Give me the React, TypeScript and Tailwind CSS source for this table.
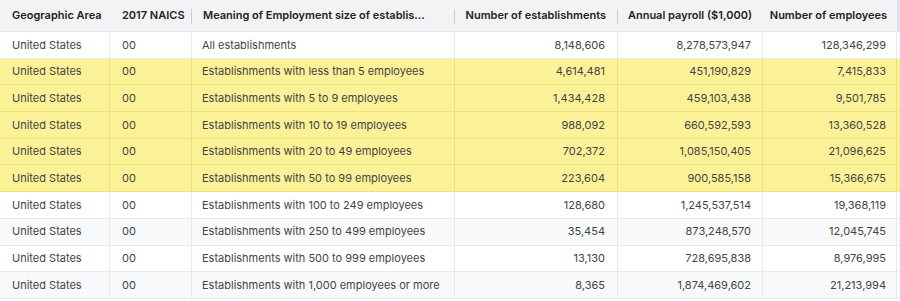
import React from "react";

const rows = [
  ["All establishments", "8,148,606", "8,278,573,947", "128,346,299"],
  ["Establishments with less than 5 employees", "4,614,481", "451,190,829", "7,415,833"],
  ["Establishments with 5 to 9 employees", "1,434,428", "459,103,438", "9,501,785"],
  ["Establishments with 10 to 19 employees", "988,092", "660,592,593", "13,360,528"],
  ["Establishments with 20 to 49 employees", "702,372", "1,085,150,405", "21,096,625"],
  ["Establishments with 50 to 99 employees", "223,604", "900,585,158", "15,366,675"],
  ["Establishments with 100 to 249 employees", "128,680", "1,245,537,514", "19,368,119"],
  ["Establishments with 250 to 499 employees", "35,454", "873,248,570", "12,045,745"],
  ["Establishments with 500 to 999 employees", "13,130", "728,695,838", "8,976,995"],
  ["Establishments with 1,000 employees or more", "8,365", "1,874,469,602", "21,213,994"],
];

function Sep() {
  return <span className="absolute right-0 top-[9px] h-[15px] w-px bg-[#c9ced6]" />;
}

export default function App() {
  return (
    <div
      className="w-[900px] h-[301px] overflow-hidden bg-white text-[11px] whitespace-nowrap"
      style={{ fontFamily: "Inter, 'Noto Sans', sans-serif" }}
    >
      <div className="flex h-[32px] bg-[#f3f3f5] border-b border-[#e6e7ea] font-semibold text-[#222]">
        <div className="w-[110px] shrink-0 relative flex items-center pl-3">Geographic Area</div>
        <div className="w-[82px] shrink-0 relative flex items-center pl-3">
          2017 NAICS
          <Sep />
        </div>
        <div className="w-[263px] shrink-0 relative flex items-center pl-[11px] pr-[28px]">
          <span className="truncate">Meaning of Employment size of establishments</span>
          <Sep />
        </div>
        <div className="w-[163px] shrink-0 relative flex items-center justify-end pr-3">
          Number of establishments
          <Sep />
        </div>
        <div className="w-[145px] shrink-0 relative flex items-center justify-end pr-[11px]">
          Annual payroll ($1,000)
        </div>
        <div className="w-[134px] shrink-0 relative flex items-center justify-end pr-[10px]">
          Number of employees
        </div>
        <div className="w-[3px] shrink-0 bg-[#dde1e8]" />
      </div>
      {rows.map((r, i) => {
        const hl = i >= 1 && i <= 5;
        const bg = hl ? "bg-[#fbf298]" : i % 2 === 1 ? "bg-[#f8f9fb]" : "bg-white";
        const bc = hl ? "border-[#ece27f]" : "border-[#e9eaec]";
        return (
          <div key={i} className={`flex h-[26.7px] border-b ${bc} ${bg} text-[#444]`}>
            <div className={`w-[110px] shrink-0 flex items-center pl-3 border-r ${bc}`}>United States</div>
            <div className={`w-[82px] shrink-0 flex items-center pl-3 border-r ${bc}`}>00</div>
            <div className={`w-[263px] shrink-0 flex items-center pl-[10px] border-r ${bc}`}>{r[0]}</div>
            <div className={`w-[163px] shrink-0 flex items-center justify-end pr-3 border-r ${bc}`}>{r[1]}</div>
            <div className={`w-[145px] shrink-0 flex items-center justify-end pr-[11px] border-r ${bc}`}>{r[2]}</div>
            <div className={`w-[134px] shrink-0 flex items-center justify-end pr-[10px] border-r ${bc}`}>{r[3]}</div>
            <div className="w-[3px] shrink-0" />
          </div>
        );
      })}
    </div>
  );
}
